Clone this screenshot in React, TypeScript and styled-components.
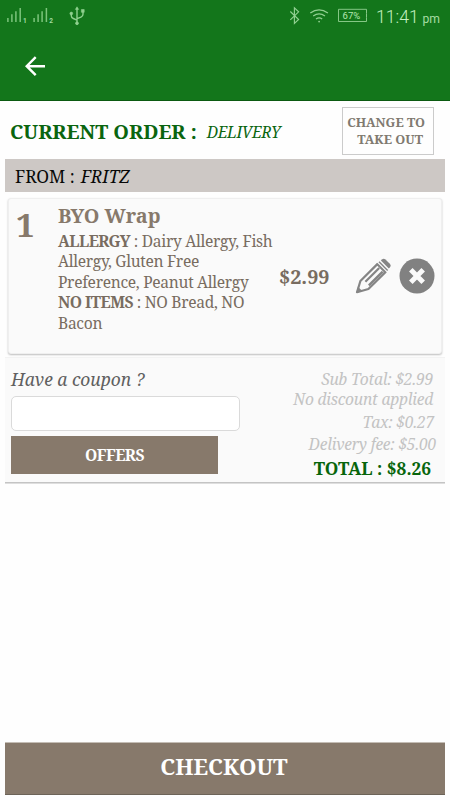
import React from "react";
import styled, { createGlobalStyle } from "styled-components";

const serif = '"Noto Serif", "Droid Serif", "DejaVu Serif Condensed", serif';
const taupe = "#87796b";
const green = "#0a650f";

const GlobalStyle = createGlobalStyle`
  *, *::before, *::after { box-sizing: border-box; }
  body { margin: 0; background: #fefefe; }
`;

const Screen = styled.div`
  display: flex;
  flex-direction: column;
  width: 450px;
  height: 800px;
  overflow: hidden;
  padding-bottom: 5px;
  background: #fefefe;
  font-family: ${serif};
  white-space: nowrap;
`;

const Header = styled.header`
  flex: none;
  height: 101px;
  background: #13761b;
  border-bottom: 1px solid #0b5a11;
`;

const StatusBar = styled.div`
  display: flex;
  justify-content: space-between;
  height: 34px;
  color: #8fd08f;
`;

const Clock = styled.div`
  display: flex;
  align-items: baseline;
  justify-content: space-between;
  width: 74px;
  padding: 7px 10px 0 0;
  font: 300 17.6px/21px Roboto, sans-serif;
  color: #c4efc0;
`;

const Meridiem = styled.span`
  font-size: 12.2px;
  font-weight: 400;
  color: #a3dba1;
`;

const StatusSide = styled.div`
  display: flex;
`;

const BackButton = styled.button`
  display: block;
  margin: 20px 0 0 23px;
  padding: 0;
  border: 0;
  background: none;
  line-height: 0;
`;

const OrderRow = styled.section`
  display: flex;
  align-items: flex-start;
  justify-content: space-between;
  flex: none;
  height: 58px;
  padding: 6px 16px 0 10px;
`;

const OrderHeading = styled.h1`
  display: flex;
  align-items: baseline;
  gap: 10px;
  margin: 15px 0 0;
  font-size: 19.9px;
  line-height: 20px;
  color: ${green};
`;

const OrderMode = styled.em`
  position: relative;
  top: -1.5px;
  font-size: 15.6px;
  font-weight: 400;
  letter-spacing: -0.35px;
`;

const ChangeButton = styled.button`
  width: 92px;
  height: 48px;
  padding: 0 6px 0 3px;
  border: 1.5px solid #cbcbcb;
  background: #fefefe;
  font: 700 12.7px/17px ${serif};
  text-align: right;
  color: #807a70;
`;

const ChangeLine = styled.span<{ $end: number }>`
  display: block;
  margin-left: -4px;
  padding-right: ${(p) => p.$end}px;
`;

const FromBar = styled.div`
  display: flex;
  flex: none;
  gap: 6px;
  height: 33px;
  margin: 0 5px;
  padding: 0 10px;
  background: #cdc8c5;
  font-size: 17.3px;
  line-height: 35px;
  color: #080808;
`;

const ItemCard = styled.article`
  display: grid;
  grid-template-columns: 49px 221px 76px 44px 1fr;
  flex: none;
  height: 156px;
  margin: 6px 8px 3px;
  border: 1px solid #efefef;
  border-radius: 3px;
  background: #fafafa;
  box-shadow: 0 1px 2px #bdbdbd;
  color: #786c60;
`;

const Quantity = styled.div`
  padding: 6px 0 0 7px;
  font-size: 33px;
  font-weight: 700;
  line-height: 40px;
  color: ${taupe};
`;

const Details = styled.div`
  padding-top: 3px;
  font-size: 15.6px;
  letter-spacing: -0.31px;
  line-height: 20.45px;

  b { letter-spacing: -0.5px; }
`;

const ItemName = styled.h2`
  margin: 0 0 1px;
  font-size: 19.9px;
  letter-spacing: 0;
  line-height: 28px;
  color: ${taupe};
`;

const Price = styled.div`
  align-self: center;
  padding-top: 2px;
  font-size: 19.8px;
  font-weight: 700;
  line-height: 28px;
`;

const IconButton = styled.button`
  align-self: center;
  justify-self: start;
  padding: 0;
  border: 0;
  background: none;
  line-height: 0;
`;

const SummaryPanel = styled.section`
  display: flex;
  justify-content: space-between;
  flex: none;
  height: 125px;
  margin: 0 5px;
  padding: 9px 9px 0 6px;
  background: #fafafa;
  border-top: 1px solid #f3f3f3;
  box-shadow: 0 1px 0 #c4c4c4, 0 2px 0 #dedede;
`;

const CouponForm = styled.div`
  display: flex;
  flex-direction: column;
  width: 229px;
`;

const CouponLabel = styled.label`
  height: 29px;
  font-size: 17.4px;
  font-style: italic;
  line-height: 24px;
  color: #606060;
`;

const CouponInput = styled.input`
  width: 229px;
  height: 35px;
  margin: 0;
  border: 1.5px solid #dadada;
  border-radius: 5px;
  background: #fff;
`;

const OffersButton = styled.button`
  width: 207px;
  height: 38px;
  margin-top: 5px;
  padding: 0;
  border: 0;
  background: ${taupe};
  font: 700 15.6px/38px ${serif};
  letter-spacing: -0.5px;
  color: #fff;
`;

const Totals = styled.div`
  display: flex;
  flex-direction: column;
  align-items: flex-end;
  padding-top: 2px;
`;

const TotalLine = styled.div<{ $height: number; $end: number }>`
  height: ${(p) => p.$height}px;
  margin-right: ${(p) => p.$end}px;
  font-size: 15.6px;
  letter-spacing: -0.23px;
  font-style: italic;
  line-height: 21px;
  color: #c3c3c3;
`;

const GrandTotal = styled.div`
  margin-right: 5px;
  font-size: 17.3px;
  font-weight: 700;
  line-height: 25px;
  color: #07650b;
`;

const CheckoutButton = styled.button`
  flex: none;
  height: 52px;
  margin: auto 5px 0;
  padding: 0 2px 4px 0;
  border: solid #6c6358;
  border-width: 0 0 1px;
  box-shadow: 0 -1px 0 #c4bdb5;
  background: ${taupe};
  font: 700 22.3px/47px ${serif};
  color: #fff;
`;

const SimSignal = ({ x, sim }: { x: number; sim: number }) => (
  <g transform={`translate(${x} 0)`}>
    <path d="M.7 18v4M4.7 14.3V22M8.7 11.3V22M13 8v14" stroke="#7cc47b" strokeWidth="1.5" />
    <text x="15.8" y="23" fontSize="6.5" fontWeight="700" fontFamily="Roboto, sans-serif" fill="#a4dca3">{sim}</text>
  </g>
);

const StatusLeft = () => (
  <svg width="100" height="34" fill="none">
    <SimSignal x={7.2} sim={1} />
    <SimSignal x={33.4} sim={2} />
    <g stroke="#8fd08e" strokeWidth="1.4">
      <path d="M77 8v16M71.3 13.5v2.2q0 2 2 2.8l3.7 1.6M83 11.5v2.8q0 2-2 2.8l-4 1.6" />
      <circle cx="77" cy="23.3" r="1.4" fill="#8fd08e" strokeWidth="0.8" />
      <circle cx="71.3" cy="13.5" r="1.4" fill="#8fd08e" strokeWidth="0.6" />
      <path d="M81.4 9.5h2.8v2.8h-2.8zM77 6.8l-1.6 2.6h3.2z" fill="#8fd08e" strokeWidth="0.6" />
    </g>
  </svg>
);

const StatusRight = () => (
  <svg width="94" height="34" viewBox="282 0 94 34" fill="none" stroke="#92d092" strokeWidth="1.15">
    <path d="M290.3 11.5l8.3 8-4.2 4V7.8l4.2 4-8.3 8" />
    <path d="M310.3 13q8.7-6.4 17.6 0M313.2 16q5.9-4.2 11.8 0M316 19q3.1-2.1 6.2 0" strokeWidth="1.3" />
    <circle cx="319.1" cy="21.6" r="0.9" fill="#92d092" stroke="none" />
    <path d="M366.5 13.5V9.3h-28v12.2h28v-4M366.5 13.5v4" strokeWidth="0.9" />
    <text x="342.6" y="19" fontSize="9.5" fontFamily="Roboto, sans-serif" fill="#b4e6b0" stroke="none">67%</text>
  </svg>
);

const BackArrow = () => (
  <svg width="24" height="24" viewBox="0 0 24 24" fill="none" stroke="#fff" strokeWidth="2.4">
    <path d="M22 12.2H4M12.7 3.2L3.7 12.2l9 9" />
  </svg>
);

const PencilIcon = () => (
  <svg width="36" height="36" viewBox="0 0 36 36" fill="none">
    <path d="M2 34.2L5.4 23 22.8 5.6l8.1 8L13.4 31z" stroke="#858585" strokeWidth="2.2" strokeLinejoin="round" />
    <path d="M1.2 35l1.8-6.2 4.3 4.1z" fill="#858585" />
    <path d="M10.4 23.8L24.2 10M13.8 27.4L27.6 13.6" stroke="#858585" strokeWidth="2.2" />
    <path d="M22.3 3.6l10.3 10.4" stroke="#fafafa" strokeWidth="1.6" />
    <path d="M24 3.7l8.7 8.8" stroke="#858585" strokeWidth="1.4" />
    <path d="M21.9 6.2l7.8 7.8" stroke="#858585" strokeWidth="1.6" />
    <path d="M25.9 2.5l1-1q1.7-1.6 3.6 0l4.3 4.3q1.7 1.8 0 3.6l-1 1z" fill="#858585" />
  </svg>
);

const RemoveIcon = () => (
  <svg width="36" height="36" viewBox="0 0 36 36">
    <circle cx="18" cy="18" r="17.5" fill="#818181" />
    <path d="M11.8 11.8l12.4 12.4M24.2 11.8L11.8 24.2" stroke="#fafafa" strokeWidth="5" />
  </svg>
);

export default function App() {
  return (
    <>
      <GlobalStyle />
      <Screen>
        <Header>
          <StatusBar>
            <StatusLeft />
            <StatusSide>
              <StatusRight />
              <Clock>11:41<Meridiem>pm</Meridiem></Clock>
            </StatusSide>
          </StatusBar>
          <BackButton aria-label="Back"><BackArrow /></BackButton>
        </Header>

        <OrderRow>
          <OrderHeading>CURRENT ORDER :<OrderMode>DELIVERY</OrderMode></OrderHeading>
          <ChangeButton>
            <ChangeLine $end={2}>CHANGE TO</ChangeLine>
            <ChangeLine $end={4}>TAKE OUT</ChangeLine>
          </ChangeButton>
        </OrderRow>

        <FromBar>FROM : <em>FRITZ</em></FromBar>

        <ItemCard>
          <Quantity>1</Quantity>
          <Details>
            <ItemName>BYO Wrap</ItemName>
            <b>ALLERGY</b> : Dairy Allergy, Fish<br />
            Allergy, Gluten Free<br />
            Preference, Peanut Allergy<br />
            <b>NO ITEMS</b> : NO Bread, NO<br />
            Bacon
          </Details>
          <Price>$2.99</Price>
          <IconButton aria-label="Edit item"><PencilIcon /></IconButton>
          <IconButton aria-label="Remove item"><RemoveIcon /></IconButton>
        </ItemCard>

        <SummaryPanel>
          <CouponForm>
            <CouponLabel htmlFor="coupon">Have a coupon ?</CouponLabel>
            <CouponInput id="coupon" />
            <OffersButton>OFFERS</OffersButton>
          </CouponForm>
          <Totals>
            <TotalLine $height={20} $end={3}>Sub Total: $2.99</TotalLine>
            <TotalLine $height={22.5} $end={3}>No discount applied</TotalLine>
            <TotalLine $height={22.5} $end={2}>Tax: $0.27</TotalLine>
            <TotalLine $height={22} $end={0}>Delivery fee: $5.00</TotalLine>
            <GrandTotal>TOTAL : $8.26</GrandTotal>
          </Totals>
        </SummaryPanel>

        <CheckoutButton>CHECKOUT</CheckoutButton>
      </Screen>
    </>
  );
}
